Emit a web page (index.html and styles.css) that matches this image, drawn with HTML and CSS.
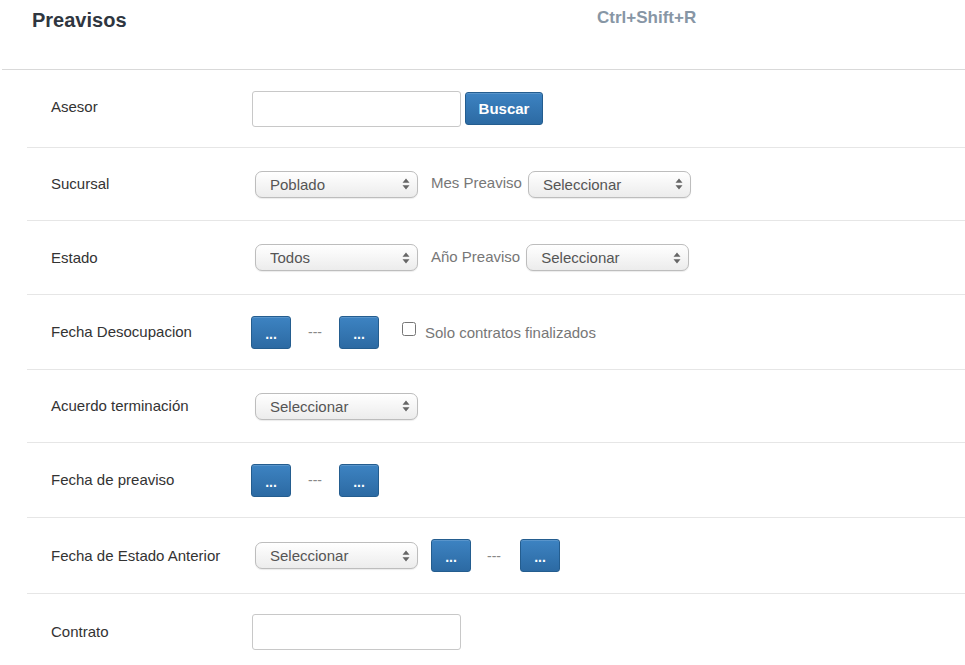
FILE: index.html
```html
<!DOCTYPE html>
<html lang="es">
<head>
<meta charset="utf-8">
<title>Preavisos</title>
<link rel="stylesheet" href="styles.css">
</head>
<body>
<div class="header">
  <h1 class="title">Preavisos</h1>
  <span class="shortcut">Ctrl+Shift+R</span>
</div>
<div class="form">
  <div class="row row-first">
    <div class="label">Asesor</div>
    <div class="controls">
      <input class="text" type="text">
      <button class="btn btn-buscar">Buscar</button>
    </div>
  </div>
  <div class="row row-b">
    <div class="label">Sucursal</div>
    <div class="controls">
      <select class="sel"><option>Poblado</option></select>
      <span class="inline-label">Mes Preaviso</span>
      <select class="sel sel-tight"><option>Seleccionar</option></select>
    </div>
  </div>
  <div class="row row-c">
    <div class="label">Estado</div>
    <div class="controls">
      <select class="sel"><option>Todos</option></select>
      <span class="inline-label">Año Preaviso</span>
      <select class="sel sel-tight"><option>Seleccionar</option></select>
    </div>
  </div>
  <div class="row row-d">
    <div class="label">Fecha Desocupacion</div>
    <div class="controls">
      <button class="btn btn-date">...</button>
      <span class="dash">---</span>
      <button class="btn btn-date">...</button>
      <label class="check"><input type="checkbox"><span>Solo contratos finalizados</span></label>
    </div>
  </div>
  <div class="row row-b">
    <div class="label">Acuerdo terminación</div>
    <div class="controls">
      <select class="sel"><option>Seleccionar</option></select>
    </div>
  </div>
  <div class="row row-d">
    <div class="label">Fecha de preaviso</div>
    <div class="controls">
      <button class="btn btn-date">...</button>
      <span class="dash">---</span>
      <button class="btn btn-date">...</button>
    </div>
  </div>
  <div class="row row-e">
    <div class="label">Fecha de Estado Anterior</div>
    <div class="controls">
      <select class="sel"><option>Seleccionar</option></select>
      <button class="btn btn-date btn-after-sel">...</button>
      <span class="dash dash-tight">---</span>
      <button class="btn btn-date">...</button>
    </div>
  </div>
  <div class="row row-last">
    <div class="label">Contrato</div>
    <div class="controls">
      <input class="text" type="text">
    </div>
  </div>
</div>
</body>
</html>
```
FILE: styles.css
```css
html, body {
  margin: 0;
  padding: 0;
  background: #fff;
  font-family: "Liberation Sans", Arial, sans-serif;
  font-size: 15px;
  color: #333;
}

.header {
  margin-left: 2px;
  border-bottom: 1px solid #d9d9d9;
  display: flex;
  align-items: flex-start;
  box-sizing: border-box;
  height: 70px;
}

.title {
  margin: 8px 0 0 30px;
  font-size: 20px;
  font-weight: bold;
  color: #2f3640;
  line-height: 24px;
  width: 565px;
}

.shortcut {
  margin-top: 8px;
  font-size: 17px;
  font-weight: bold;
  color: #8796a5;
  line-height: 20px;
}

.form {
  margin-left: 27px;
}

.row {
  display: flex;
  align-items: center;
  border-top: 1px solid #e6e6e6;
  box-sizing: border-box;
  height: 74px;
}

.row-first {
  border-top: none;
  height: 77px;
}

.row-b { height: 73px; }
.row-c { height: 74px; }
.row-d { height: 75px; }
.row-e { height: 76px; }
.row-last { height: 76px; }

.label {
  width: 201px;
  padding-left: 24px;
  color: #333;
  line-height: 18px;
}

.row-first .label { position: relative; top: -2px; }

.controls {
  display: flex;
  align-items: center;
}

.text {
  width: 209px;
  height: 36px;
  box-sizing: border-box;
  border: 1px solid #c8c8c8;
  border-radius: 3px;
  margin: 0;
  padding: 4px 8px;
  font: inherit;
  background: #fff;
}

.btn {
  font-family: "Liberation Sans", Arial, sans-serif;
  color: #fff;
  border: 1px solid #245d8f;
  border-radius: 3px;
  background: linear-gradient(#3d83c2, #2c6aa3);
  box-shadow: inset 0 1px 0 rgba(255,255,255,0.15);
  margin: 0;
  padding: 0;
  cursor: pointer;
}

.btn-buscar {
  margin-left: 4px;
  width: 78px;
  height: 33px;
  font-size: 15px;
  font-weight: bold;
}

.btn-date {
  width: 40px;
  height: 33px;
  font-size: 14px;
  font-weight: bold;
  line-height: 14px;
  padding-top: 3px;
}

.row-d .controls { margin-left: -1px; }

.btn-after-sel { margin-left: 13px; }

.dash {
  width: 48px;
  text-align: center;
  color: #888;
  font-size: 14px;
}

.dash-tight { width: 49px; text-align: left; padding-left: 16px; box-sizing: border-box; }

.sel {
  -webkit-appearance: none;
  appearance: none;
  margin: 0 0 0 3px;
  width: 163px;
  height: 27px;
  box-sizing: border-box;
  border: 1px solid #bdbdbd;
  border-radius: 7px;
  padding: 0 24px 0 14px;
  font-family: "Liberation Sans", Arial, sans-serif;
  font-size: 15px;
  color: #555;
  background-color: #f4f4f4;
  background-image: url("data:image/svg+xml,%3Csvg xmlns='http://www.w3.org/2000/svg' width='8' height='14' viewBox='0 0 8 14'%3E%3Cpath d='M4 1.5 L7.5 5.8 L0.5 5.8 Z M4 12.5 L7.5 8.2 L0.5 8.2 Z' fill='%23666'/%3E%3C/svg%3E"), linear-gradient(#ffffff, #ececec);
  background-repeat: no-repeat, no-repeat;
  background-position: right 7px center, 0 0;
  background-size: 8px 14px, 100% 100%;
  box-shadow: 0 1px 1px rgba(0,0,0,0.08);
}

.sel-tight { margin-left: 6px; }

.inline-label {
  margin-left: 13px;
  color: #777;
  line-height: 18px;
  position: relative;
  top: -1px;
}

.check {
  display: flex;
  align-items: center;
  margin-left: 23px;
  color: #777;
}

.check input {
  margin: 0 9px 0 0;
  width: 14px;
  height: 14px;
  position: relative;
  top: -3px;
}
```
